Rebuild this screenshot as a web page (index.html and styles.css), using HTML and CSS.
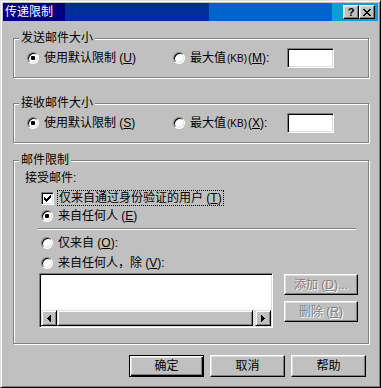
FILE: index.html
```html
<!DOCTYPE html>
<html lang="zh-CN">
<head>
<meta charset="utf-8">
<title>传递限制</title>
<link rel="stylesheet" href="styles.css">
</head>
<body>
<div class="window">
  <div class="titlebar">
    <span class="title">传递限制</span>
    <div class="caption-btns">
      <span class="cap-btn help">?</span>
      <span class="cap-btn close">
        <svg width="8" height="7" viewBox="0 0 8 7" shape-rendering="crispEdges"><path fill="#000" d="M0 0h2v1h-2zM6 0h2v1h-2zM1 1h2v1h-2zM5 1h2v1h-2zM2 2h4v1h-4zM3 3h2v1h-2zM2 4h4v1h-4zM1 5h2v1h-2zM5 5h2v1h-2zM0 6h2v1h-2zM6 6h2v1h-2z"/></svg>
      </span>
    </div>
  </div>

  <div class="content">
    <fieldset class="group g-send">
      <legend>发送邮件大小</legend>
      <div class="size-row">
        <label class="opt opt-default"><span class="radio checked"></span><span class="opt-text">使用默认限制 (<u>U</u>)</span></label>
        <label class="opt opt-max"><span class="radio"></span><span class="opt-text">最大值<span class="kb">(KB)</span>(<u>M</u>):</span></label>
        <span class="field"></span>
      </div>
    </fieldset>

    <fieldset class="group g-recv">
      <legend>接收邮件大小</legend>
      <div class="size-row">
        <label class="opt opt-default"><span class="radio checked"></span><span class="opt-text">使用默认限制 (<u>S</u>)</span></label>
        <label class="opt opt-max"><span class="radio"></span><span class="opt-text">最大值<span class="kb">(KB)</span>(<u>X</u>):</span></label>
        <span class="field"></span>
      </div>
    </fieldset>

    <fieldset class="group g-limit">
      <legend>邮件限制</legend>
      <div class="limit-body">
        <div class="caption">接受邮件:</div>
        <div class="check-row">
          <span class="checkbox">
            <svg width="7" height="7" viewBox="0 0 7 7" shape-rendering="crispEdges"><path fill="#000" d="M6 0h1v3h-1zM5 1h1v3h-1zM4 2h1v3h-1zM3 3h1v3h-1zM2 4h1v3h-1zM1 3h1v3h-1zM0 2h1v3h-1z"/></svg>
          </span>
          <span class="focus-label">仅来自通过身份验证的用户 (<u>T</u>)</span>
        </div>
        <label class="opt limit-opt r-any"><span class="radio checked"></span><span class="opt-text">来自任何人 (<u>E</u>)</span></label>
        <div class="separator"></div>
        <label class="opt limit-opt r-only"><span class="radio"></span><span class="opt-text">仅来自 (<u>O</u>):</span></label>
        <label class="opt limit-opt r-except"><span class="radio"></span><span class="opt-text">来自任何人，除 (<u>V</u>):</span></label>
        <div class="list-row">
          <div class="listbox">
            <div class="list-area"></div>
            <div class="hscroll">
              <span class="sb-btn">
                <svg width="4" height="7" viewBox="0 0 4 7" shape-rendering="crispEdges"><path fill="#000" d="M3 0h1v7h-1zM2 1h1v5h-1zM1 2h1v3h-1zM0 3h1v1h-1z"/></svg>
              </span>
              <span class="sb-track"><span class="sb-thumb"></span></span>
              <span class="sb-btn">
                <svg width="4" height="7" viewBox="0 0 4 7" shape-rendering="crispEdges"><path fill="#000" d="M0 0h1v7h-1zM1 1h1v5h-1zM2 2h1v3h-1zM3 3h1v1h-1z"/></svg>
              </span>
            </div>
          </div>
          <div class="side-btns">
            <span class="btn disabled">添加 (<u>D</u>)...</span>
            <span class="btn disabled">删除 (<u>R</u>)</span>
          </div>
        </div>
      </div>
    </fieldset>

    <div class="dialog-btns">
      <span class="btn big default">确定</span>
      <span class="btn big">取消</span>
      <span class="btn big">帮助</span>
    </div>
  </div>
</div>
</body>
</html>
```
FILE: styles.css
```css
* { box-sizing: border-box; }
html, body { margin: 0; padding: 0; }
body {
  width: 381px;
  height: 388px;
  overflow: hidden;
  background: #c0c0c0;
  font-family: "Liberation Sans", "Noto Sans CJK SC", sans-serif;
  font-size: 12px;
  color: #000;
}
u { text-decoration: underline; text-underline-offset: 1px; }

.window {
  width: 381px;
  height: 388px;
  border: 1px solid;
  border-color: #dfdfdf #000 #000 #dfdfdf;
  box-shadow: inset 1px 1px #fff, inset -1px -1px #808080;
  padding: 2px;
  background: #c0c0c0;
  display: flex;
  flex-direction: column;
}

.titlebar {
  height: 18px;
  flex: none;
  display: flex;
  align-items: center;
  justify-content: space-between;
  padding: 0 3px 0 2px;
  background: linear-gradient(to right, #000080 0 62px, #002f9b 62px 206px, #0063cb 206px 329px, #0aa0d0 329px);
  color: #fff;
}
.title { font-size: 12px; line-height: 14px; }
.caption-btns { display: flex; }
.cap-btn {
  width: 16px;
  height: 14px;
  display: flex;
  align-items: center;
  justify-content: center;
  background: #c0c0c0;
  border: 1px solid;
  border-color: #fff #000 #000 #fff;
  box-shadow: inset -1px -1px #808080, inset 1px 1px #dfdfdf;
  color: #000;
}
.cap-btn.help {
  font-family: "Liberation Sans", sans-serif;
  font-weight: bold;
  font-size: 11px;
  line-height: 11px;
}

.content {
  flex: 1;
  display: flex;
  flex-direction: column;
  padding-left: 10px;
}

.group {
  margin: 0;
  padding: 0;
  width: 356px;
  min-inline-size: 0;
  border: 1px solid #808080;
  box-shadow: inset 1px 1px #fff, 1px 1px #fff;
}
.group legend {
  margin-left: 5px;
  padding: 0 2px;
  line-height: 14px;
  background: #c0c0c0;
}
.g-send { margin-top: 10px; }
.g-recv { margin-top: 18px; }
.g-limit { margin-top: 10px; }

.size-row {
  display: flex;
  align-items: center;
  height: 20px;
  margin: 3px 0 9px;
  padding-left: 13px;
}
.opt { display: flex; align-items: center; line-height: 14px; }
.opt-default { width: 146px; }
.opt-max { width: 114px; }
.kb { font-size: 10px; margin: 0 1px; }
.radio {
  width: 12px;
  height: 12px;
  flex: none;
  border-radius: 50%;
  background: #fff;
  border: 1px solid;
  border-color: #808080 #fff #fff #808080;
  box-shadow: inset 1px 1px 0 #000, inset -1px -1px 0 #dfdfdf;
  margin-right: 5px;
  display: flex;
  align-items: center;
  justify-content: center;
}
.radio.checked::after {
  content: "";
  width: 4px;
  height: 4px;
  border-radius: 1px;
  background: #000;
}
.field {
  width: 47px;
  height: 20px;
  background: #fff;
  border: 1px solid;
  border-color: #808080 #fff #fff #808080;
  box-shadow: inset 1px 1px #000, inset -1px -1px #dfdfdf;
}

.limit-body {
  display: flex;
  flex-direction: column;
  padding: 0 0 15px 11px;
}
.caption { line-height: 14px; height: 14px; margin-top: 4px; }
.check-row {
  display: flex;
  align-items: center;
  height: 16px;
  margin: 5px 0 0 16px;
}
.checkbox {
  width: 13px;
  height: 13px;
  flex: none;
  background: #fff;
  border: 1px solid;
  border-color: #808080 #fff #fff #808080;
  box-shadow: inset 1px 1px #000, inset -1px -1px #dfdfdf;
  display: flex;
  align-items: center;
  justify-content: center;
}
.focus-label {
  margin-left: 3px;
  padding: 0 1px;
  height: 16px;
  line-height: 14px;
  border: 1px dotted #000;
}
.limit-opt { height: 14px; margin-left: 16px; }
.r-any { margin-top: 3px; }
.separator {
  margin: 5px 0 0 13px;
  width: 318px;
  height: 2px;
  border-top: 1px solid #808080;
  border-bottom: 1px solid #fff;
}
.r-only { margin-top: 6px; }
.r-except { margin-top: 6px; }

.list-row {
  display: flex;
  align-items: flex-start;
  margin: 3px 0 0 14px;
}
.listbox {
  width: 234px;
  height: 55px;
  border: 1px solid;
  border-color: #808080 #fff #fff #808080;
  box-shadow: inset 1px 1px #000, inset -1px -1px #dfdfdf;
  padding: 1px;
  display: flex;
  flex-direction: column;
}
.list-area { flex: 1; background: #fff; }
.hscroll { height: 16px; display: flex; }
.sb-btn {
  width: 16px;
  height: 16px;
  flex: none;
  display: flex;
  align-items: center;
  justify-content: center;
  background: #c0c0c0;
  border: 1px solid;
  border-color: #dfdfdf #000 #000 #dfdfdf;
  box-shadow: inset 1px 1px #fff, inset -1px -1px #808080;
}
.sb-track {
  flex: 1;
  display: flex;
  padding-right: 2px;
  background: repeating-conic-gradient(#fff 0 25%, #c0c0c0 0 50%) 0 0 / 2px 2px;
}
.sb-thumb {
  flex: 1;
  background: #c0c0c0;
  border: 1px solid;
  border-color: #dfdfdf #000 #000 #dfdfdf;
  box-shadow: inset 1px 1px #fff, inset -1px -1px #808080;
}
.side-btns {
  display: flex;
  flex-direction: column;
  gap: 6px;
  margin: 1px 0 0 11px;
}

.btn {
  display: flex;
  align-items: center;
  justify-content: center;
  width: 74px;
  height: 21px;
  background: #c0c0c0;
  border: 1px solid;
  border-color: #fff #000 #000 #fff;
  box-shadow: inset -1px -1px #808080, inset 1px 1px #dfdfdf;
  line-height: 14px;
  white-space: nowrap;
}
.btn.disabled { color: #808080; text-shadow: 1px 1px 0 #fff; }
.btn.big { width: 75px; height: 22px; }
.btn.default {
  border: 1px solid #000;
  box-shadow: inset 1px 1px #fff, inset -1px -1px #000, inset -2px -2px #808080, inset 2px 2px #dfdfdf;
}

.dialog-btns {
  display: flex;
  justify-content: flex-end;
  gap: 6px;
  margin: 11px 12px 0 0;
}
```
